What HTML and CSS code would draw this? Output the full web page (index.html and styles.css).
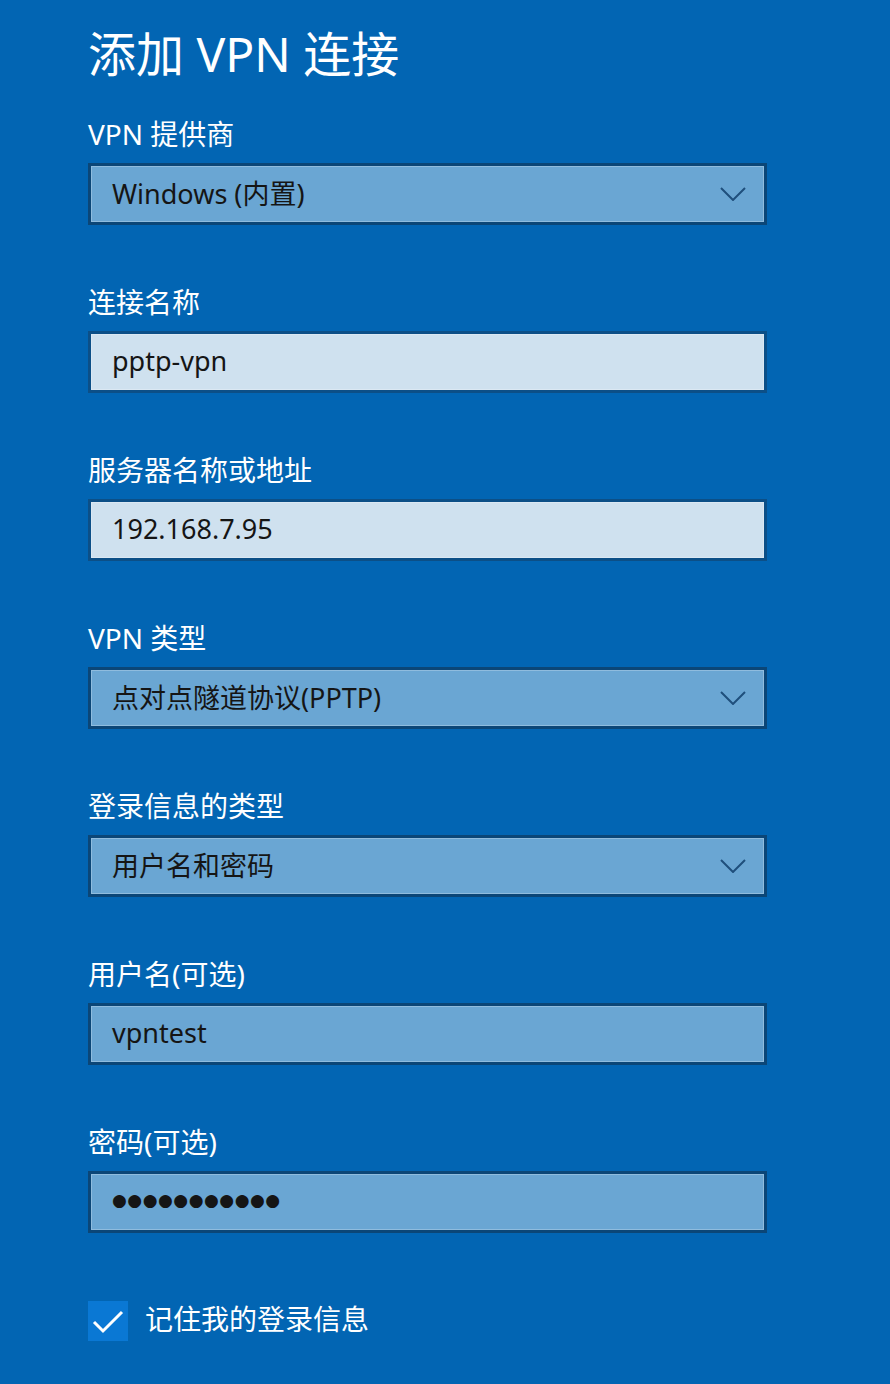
FILE: index.html
```html
<!DOCTYPE html>
<html lang="zh-CN">
<head>
  <meta charset="UTF-8" />
  <meta name="viewport" content="width=device-width, initial-scale=1.0"/>
  <title>添加 VPN 连接</title>
  <link rel="stylesheet" href="styles.css">
</head>
<body>

  <div class="panel">
    <h1 class="title">添加 VPN 连接</h1>

    <div class="field">
      <div class="label">VPN 提供商</div>
      <div class="box select">
        <span>Windows (内置)</span>
        <svg class="chevron" width="26" height="14" viewBox="0 0 26 14"><path d="M1 1 L13 13 L25 1" fill="none" stroke="#1f4f7c" stroke-width="2"/></svg>
      </div>
    </div>

    <div class="field">
      <div class="label">连接名称</div>
      <div class="box light"><span>pptp-vpn</span></div>
    </div>

    <div class="field">
      <div class="label">服务器名称或地址</div>
      <div class="box light"><span>192.168.7.95</span></div>
    </div>

    <div class="field">
      <div class="label">VPN 类型</div>
      <div class="box select">
        <span>点对点隧道协议(PPTP)</span>
        <svg class="chevron" width="26" height="14" viewBox="0 0 26 14"><path d="M1 1 L13 13 L25 1" fill="none" stroke="#1f4f7c" stroke-width="2"/></svg>
      </div>
    </div>

    <div class="field">
      <div class="label">登录信息的类型</div>
      <div class="box select">
        <span>用户名和密码</span>
        <svg class="chevron" width="26" height="14" viewBox="0 0 26 14"><path d="M1 1 L13 13 L25 1" fill="none" stroke="#1f4f7c" stroke-width="2"/></svg>
      </div>
    </div>

    <div class="field">
      <div class="label">用户名(可选)</div>
      <div class="box"><span>vpntest</span></div>
    </div>

    <div class="field">
      <div class="label">密码(可选)</div>
      <div class="box"><span class="dots">●●●●●●●●●●●</span></div>
    </div>

    <label class="remember">
      <span class="check">
        <svg width="40" height="40" viewBox="0 0 40 40"><path d="M6 21 L15 30 L34 11" fill="none" stroke="#fff" stroke-width="3"/></svg>
      </span>
      <span>记住我的登录信息</span>
    </label>
  </div>

</body>
</html>
```

FILE: styles.css
```css
body {
  margin: 0;
  background: #0265b3;
  font-family: "Noto Sans", "Noto Sans CJK SC", sans-serif;
  color: #fff;
}

.panel {
  padding: 24px 0 0 88px;
  width: 679px;
}

.title {
  margin: 0 0 32px;
  font-size: 48px;
  font-weight: normal;
  line-height: 60px;
  height: 60px;
}

.field {
  margin-bottom: 59px;
}

.label {
  font-size: 28px;
  line-height: 36px;
  height: 36px;
  margin-bottom: 11px;
}

.box {
  box-sizing: border-box;
  height: 62px;
  border: 3px solid #0b4677;
  box-shadow: inset 0 0 0 1px rgba(255, 255, 255, 0.25);
  background: #6aa6d3;
  color: #151515;
  font-size: 27px;
  display: flex;
  align-items: center;
  justify-content: space-between;
  padding: 0 18px 4px 21px;
}

.box.light {
  background: #cfe1ef;
  border-color: #0c4f87;
}

.chevron {
  display: block;
  margin-top: 4px;
}

.dots {
  font-family: "DejaVu Sans", sans-serif;
  font-size: 17px;
  letter-spacing: 0.5px;
}

.remember {
  display: flex;
  align-items: center;
  gap: 17px;
  margin-top: 68px;
  font-size: 28px;
  line-height: 34px;
}

.remember span:last-child {
  padding-bottom: 4px;
}

.check {
  width: 40px;
  height: 40px;
  background: #0a78d4;
  display: block;
}

.check svg {
  display: block;
}
```
